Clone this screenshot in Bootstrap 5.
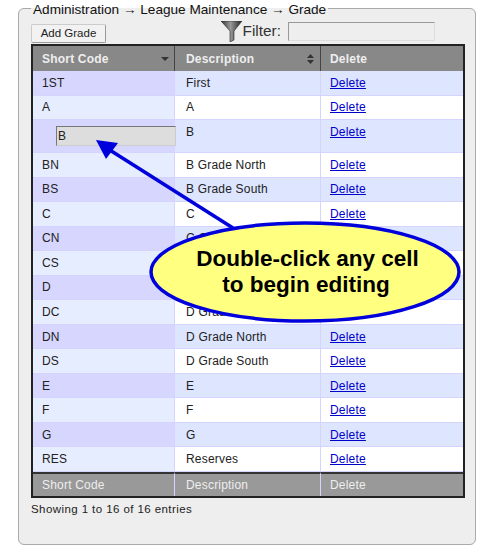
<!DOCTYPE html>
<html lang="en">
<head>
<meta charset="utf-8">
<title>Grade</title>
<link href="https://cdn.jsdelivr.net/npm/bootstrap@5.3.0/dist/css/bootstrap.min.css" rel="stylesheet">
<style>
html,body{background:#fff;margin:0;height:550px;overflow:hidden}
body{font-family:"Liberation Sans",Arial,sans-serif;color:#222;font-size:12px;position:relative}
.panel-box{margin:0 13px 0 18px;height:545px;border:1px solid #aaa;border-radius:6px;background:#eee;padding:0 12px;min-width:0}
.panel-box legend{float:none;width:auto;margin:0;padding:3px 2px 0;font-size:13.6px;line-height:14px;color:#111}
.tool-row{height:28px;margin-top:-1px}
.add-btn{width:75px;height:19px;margin-top:8px;padding:0;font-size:11.5px;line-height:17px;color:#222;background:#f2f2f2;border:1px solid #ccc;border-bottom-color:#999;border-right-color:#999;border-radius:2px}
.filter-icon{margin-top:5px}
.filter-label{margin-top:6px;font-size:15.4px;line-height:18px;color:#333}
.filter-input{width:147px;height:19px;margin-top:6px;margin-left:7px;margin-right:28px;background:#eee;border:1px solid #ddd;border-top-color:#999;border-left-color:#999}
.grade-table{table-layout:fixed;width:434px;margin:0;border:2px solid #222;border-collapse:separate;border-spacing:0;font-size:12px;letter-spacing:.2px}
.grade-table th,.grade-table td{padding:0 0 0 9px;border:0;vertical-align:middle;box-shadow:none;color:#222;height:24.54px}
.grade-table td+td,.grade-table th+th{border-left:1px solid #d4d4ff;padding-left:11px}
.grade-table td+td+td,.grade-table th+th+th{padding-left:9px}
.grade-table tbody td{border-bottom:1px solid #d4d4ff}
.grade-table thead th{background:#888;color:#eee;height:25px;font-weight:700;border-left-color:#444;position:relative}
.grade-table tfoot td{background:#999;color:#eee;height:24px;border-top:2px solid #333}
.row-odd .col-a{background:#d6d6ff}.row-odd td{background:#dde5ff}
.row-even .col-a{background:#e6edff}.row-even td{background:#fff}
.row-tall td{vertical-align:top;padding-top:3px;height:33px}
.grade-table a{color:#00c}
.sort-mark{position:absolute;right:5px;top:50%;width:0;height:0;transform:translateY(-50%)}
.sort-down{border:4px solid transparent;border-top:4px solid #333;border-bottom:0}
.sort-both{right:6px;width:7px;height:10px}
.cell-input{display:block;position:relative;z-index:1;width:120px;height:20px;margin:6px 0 0 23px;padding:0 0 0 1px;font-size:12px;line-height:16px;background:#ddd;border:1px solid #ccc;border-top-color:#777;border-left-color:#777;color:#222}
.info-line{margin-top:3px;font-size:11.5px;letter-spacing:.42px;color:#222}
.callout-layer{position:absolute;left:0;top:0;width:489px;height:550px;pointer-events:none;z-index:2}
.callout-layer text{font-family:"Liberation Sans",Arial,sans-serif;font-weight:700;font-size:22.5px;fill:#000}
</style>
</head>
<body>
<fieldset class="panel-box">
<legend>Administration → League Maintenance → Grade</legend>
<div class="tool-row d-flex justify-content-between align-items-start">
<button type="button" class="add-btn">Add Grade</button>
<div class="d-flex align-items-start">
<svg class="filter-icon" width="22" height="21" viewBox="0 0 22 21"><defs><linearGradient id="fg" x1="0" x2="1"><stop offset="0" stop-color="#333"/><stop offset=".45" stop-color="#999"/><stop offset="1" stop-color="#222"/></linearGradient></defs><path d="M0 0h21L13 10v9l-4 2V10z" fill="url(#fg)" stroke="#222" stroke-width=".6"/></svg>
<span class="filter-label">Filter:</span>
<input class="filter-input" type="text" aria-label="Filter">
</div>
</div>
<table class="table grade-table">
<colgroup><col style="width:141px"><col style="width:146px"><col></colgroup>
<thead><tr><th>Short Code<span class="sort-mark sort-down"></span></th><th>Description<svg class="sort-mark sort-both" viewBox="0 0 7 10"><path d="M3.5 0L7 4H0zM3.5 10L0 6h7z" fill="#333"/></svg></th><th>Delete</th></tr></thead>
<tbody>
<tr class="row-odd"><td class="col-a">1ST</td><td>First</td><td><a href="#">Delete</a></td></tr>
<tr class="row-even"><td class="col-a">A</td><td>A</td><td><a href="#">Delete</a></td></tr>
<tr class="row-odd row-tall"><td class="col-a p-0"><input class="cell-input" value="B" aria-label="Short code"></td><td>B</td><td><a href="#">Delete</a></td></tr>
<tr class="row-even"><td class="col-a">BN</td><td>B Grade North</td><td><a href="#">Delete</a></td></tr>
<tr class="row-odd"><td class="col-a">BS</td><td>B Grade South</td><td><a href="#">Delete</a></td></tr>
<tr class="row-even"><td class="col-a">C</td><td>C</td><td><a href="#">Delete</a></td></tr>
<tr class="row-odd"><td class="col-a">CN</td><td>C Grade North</td><td><a href="#">Delete</a></td></tr>
<tr class="row-even"><td class="col-a">CS</td><td>C Grade South</td><td><a href="#">Delete</a></td></tr>
<tr class="row-odd"><td class="col-a">D</td><td>D</td><td><a href="#">Delete</a></td></tr>
<tr class="row-even"><td class="col-a">DC</td><td>D Grade Central</td><td><a href="#">Delete</a></td></tr>
<tr class="row-odd"><td class="col-a">DN</td><td>D Grade North</td><td><a href="#">Delete</a></td></tr>
<tr class="row-even"><td class="col-a">DS</td><td>D Grade South</td><td><a href="#">Delete</a></td></tr>
<tr class="row-odd"><td class="col-a">E</td><td>E</td><td><a href="#">Delete</a></td></tr>
<tr class="row-even"><td class="col-a">F</td><td>F</td><td><a href="#">Delete</a></td></tr>
<tr class="row-odd"><td class="col-a">G</td><td>G</td><td><a href="#">Delete</a></td></tr>
<tr class="row-even"><td class="col-a">RES</td><td>Reserves</td><td><a href="#">Delete</a></td></tr>
</tbody>
<tfoot><tr><td>Short Code</td><td>Description</td><td>Delete</td></tr></tfoot>
</table>
<div class="info-line">Showing 1 to 16 of 16 entries</div>
</fieldset>
<svg class="callout-layer" viewBox="0 0 489 550">
<path d="M233 228L105 147" stroke="#00d" stroke-width="3.5" fill="none"/>
<path d="M96 140L118 143L106 159z" fill="#00d"/>
<ellipse cx="305" cy="272" rx="154" ry="49" fill="#ffff80" stroke="#00d" stroke-width="3.5"/>
<text x="307.500" y="266" text-anchor="middle">Double-click any cell</text>
<text x="306" y="292" text-anchor="middle">to begin editing</text>
</svg>
<script src="https://cdn.jsdelivr.net/npm/bootstrap@5.3.0/dist/js/bootstrap.bundle.min.js"></script>
</body>
</html>
